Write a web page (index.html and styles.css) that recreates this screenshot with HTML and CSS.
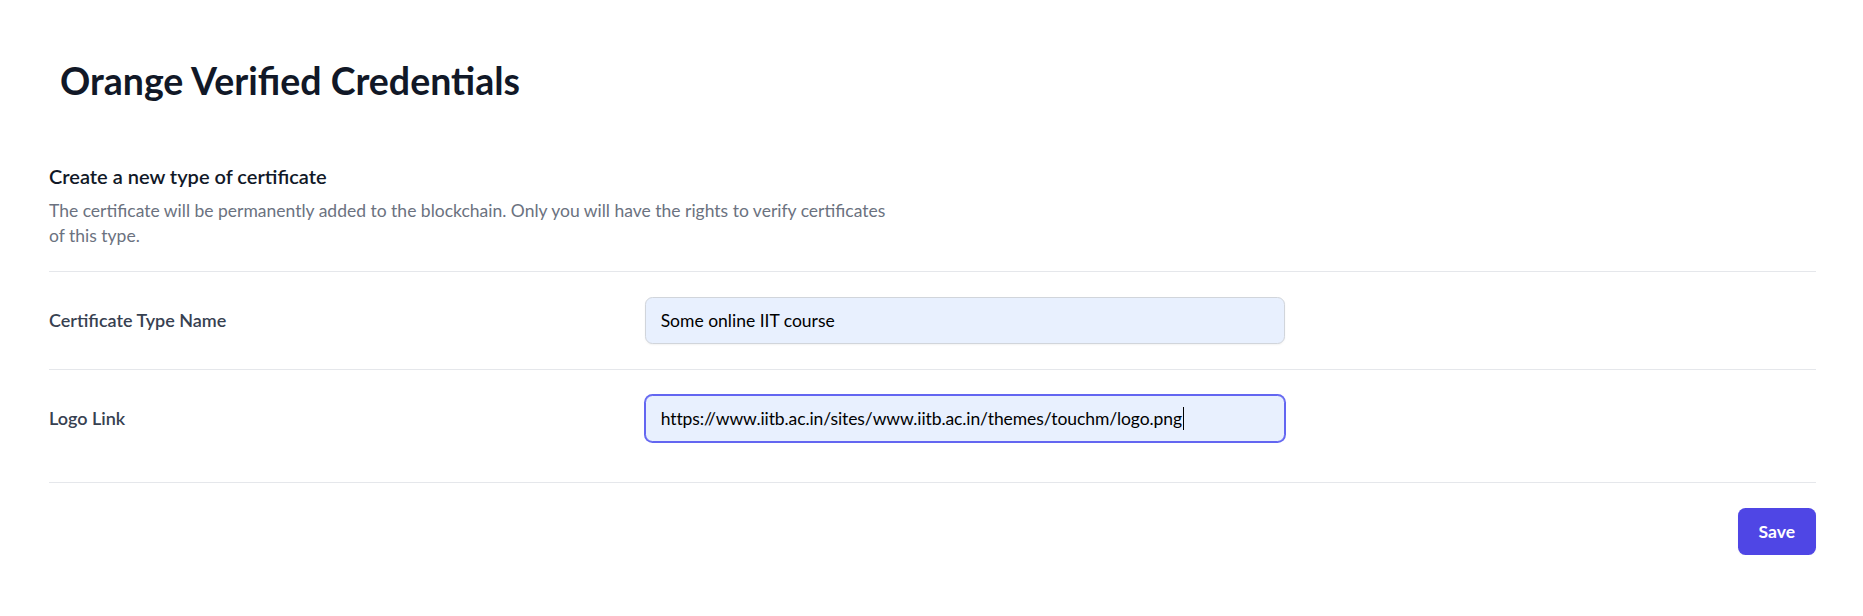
FILE: index.html
```html
<!DOCTYPE html>
<html lang="en">
<head>
<meta charset="utf-8">
<title>Orange Verified Credentials</title>
<link rel="stylesheet" href="styles.css">
</head>
<body>
<div class="page">
  <header class="header">
    <h1 class="title">Orange Verified Credentials</h1>
  </header>
  <form class="form">
    <div class="intro">
      <h3 class="heading">Create a new type of certificate</h3>
      <p class="desc">The certificate will be permanently added to the blockchain. Only you will have the rights to verify certificates of this type.</p>
    </div>
    <div class="row">
      <label class="label">Certificate Type Name</label>
      <div class="field">
        <div class="input">Some online IIT course</div>
      </div>
    </div>
    <div class="row row-last">
      <label class="label">Logo Link</label>
      <div class="field">
        <div class="input input-focus">https://www.iitb.ac.in/sites/www.iitb.ac.in/themes/touchm/logo.png<span class="caret"></span></div>
      </div>
    </div>
    <div class="actions">
      <button type="button" class="btn">Save</button>
    </div>
  </form>
</div>
</body>
</html>
```
FILE: styles.css
```css
* { box-sizing: border-box; }
html, body { margin: 0; padding: 0; background: #ffffff; }
body {
  font-family: Lato, "Noto Sans", sans-serif;
  color: #111827;
}
.page {
  padding: 0 47px 0 49px;
}
.header {
  padding: 58px 0 0 11px;
}
.title {
  margin: 0;
  font-size: 37.5px;
  line-height: 45px;
  font-weight: 700;
  color: #111827;
}
.form {
  margin-top: 58px;
}
.intro {
  padding-bottom: 23px;
}
.heading {
  margin: 0;
  font-size: 20px;
  line-height: 30px;
  font-weight: 600;
  color: #111827;
}
.desc {
  margin: 7px 0 0;
  max-width: 840px;
  font-size: 17.5px;
  line-height: 25px;
  color: #6b7280;
}
.row {
  display: grid;
  grid-template-columns: repeat(3, 1fr);
  column-gap: 20px;
  align-items: start;
  border-top: 1px solid #e5e7eb;
  padding: 25px 0;
}
.row-last {
  padding-bottom: 40px;
}
.label {
  padding-top: 11px;
  font-size: 18px;
  line-height: 25px;
  font-weight: 600;
  color: #374151;
}
.field {
  grid-column: span 2;
}
.input {
  position: relative;
  width: 100%;
  max-width: 640px;
  height: 47px;
  padding: 10px 15px;
  border: 1px solid #d1d5db;
  border-radius: 7.5px;
  background: #e8f0fe;
  box-shadow: 0 1px 2px rgba(0, 0, 0, 0.05);
  font-size: 17.5px;
  line-height: 25px;
  color: #000000;
  white-space: nowrap;
  overflow: hidden;
}
.input-focus {
  border-color: #6366f1;
  box-shadow: 0 0 0 1px #6366f1;
  letter-spacing: -0.09px;
}
.caret {
  display: inline-block;
  width: 1px;
  height: 23px;
  margin-left: 1px;
  vertical-align: -5px;
  background: #000000;
}
.actions {
  display: flex;
  justify-content: flex-end;
  border-top: 1px solid #e5e7eb;
  padding-top: 25px;
}
.btn {
  font-family: Lato, "Noto Sans", sans-serif;
  font-size: 17.5px;
  line-height: 25px;
  font-weight: 700;
  color: #ffffff;
  background: #4f46e5;
  border: 1px solid transparent;
  border-radius: 7.5px;
  padding: 10px 20px;
  box-shadow: 0 1px 2px rgba(0, 0, 0, 0.05);
  cursor: pointer;
}
```
